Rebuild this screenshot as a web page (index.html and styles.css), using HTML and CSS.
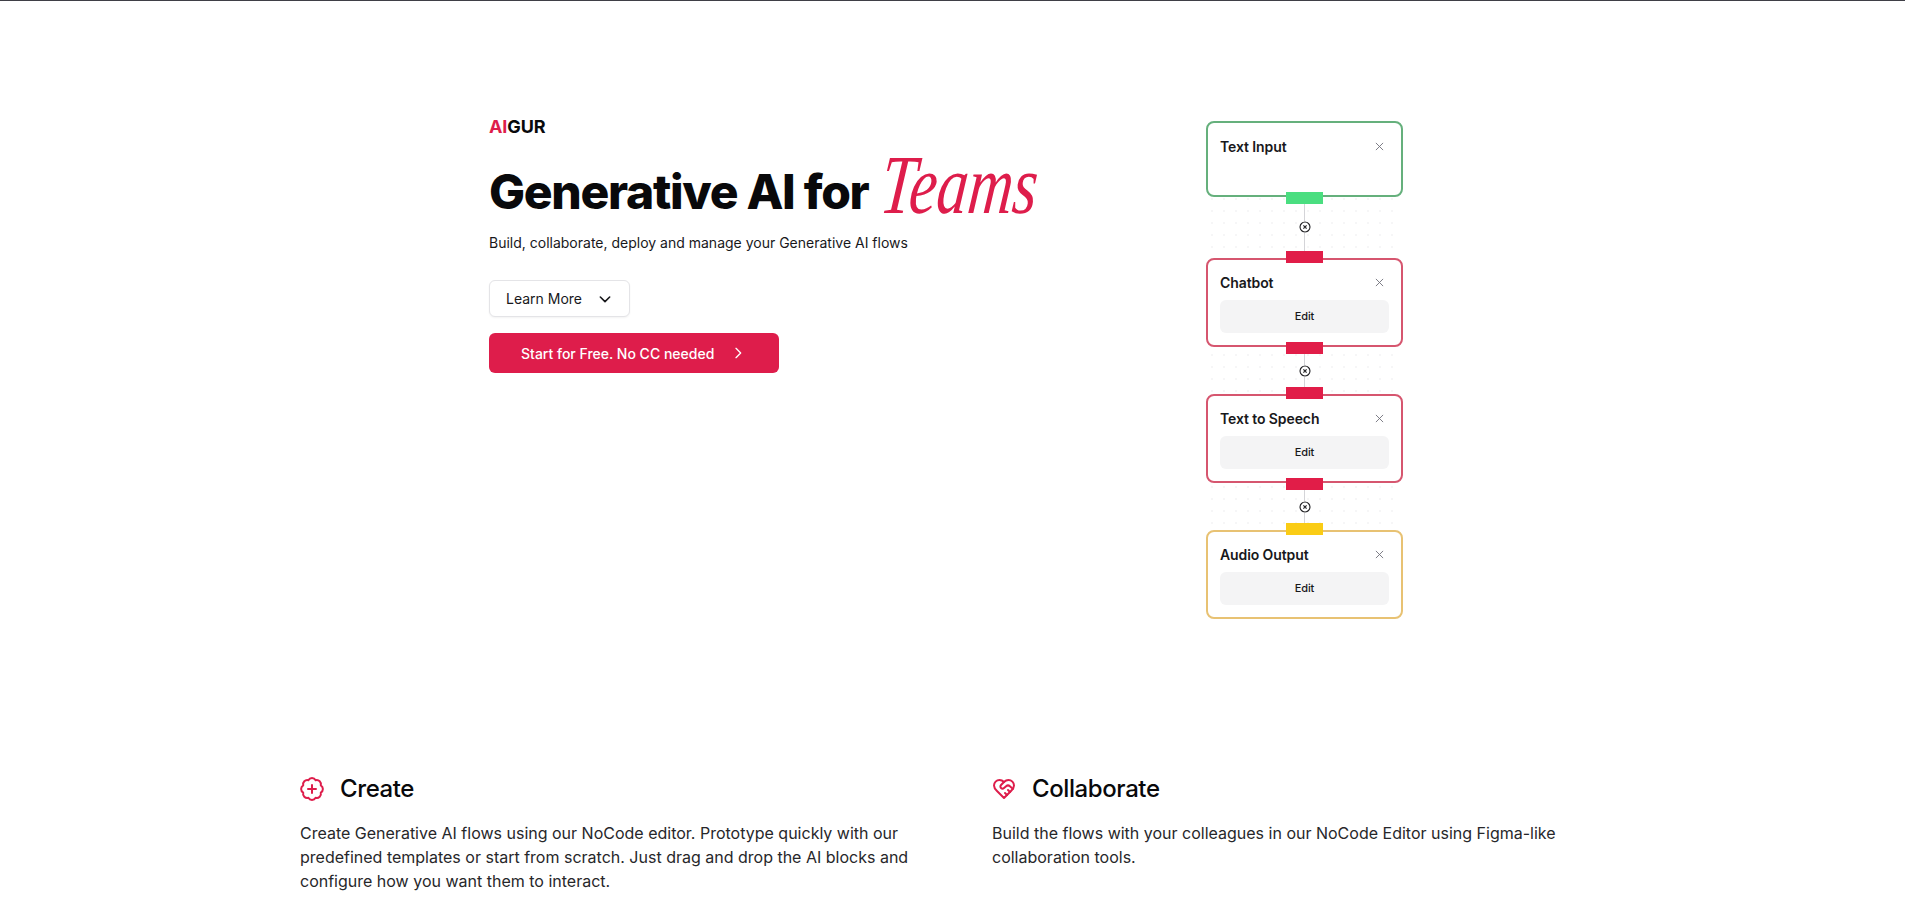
FILE: index.html
```html
<!DOCTYPE html>
<html lang="en">
  <head>
    <meta charset="UTF-8" />
    <meta name="viewport" content="width=device-width, initial-scale=1.0" />
    <title>Aigur</title>
    <link rel="stylesheet" href="styles.css">
  </head>
  <body>
    <section class="hero">
      <div class="intro">
        <div class="logo"><span class="logo-red">AI</span>GUR</div>
        <h1>Generative AI for <span class="script">Teams</span></h1>
        <p class="tagline">Build, collaborate, deploy and manage your Generative AI flows</p>
        <button class="btn-learn">
          Learn More
          <svg width="16" height="16" viewBox="0 0 24 24" fill="none" stroke="currentColor" stroke-width="2.4" stroke-linecap="round" stroke-linejoin="round"><path d="m5 9 7 7 7-7"/></svg>
        </button>
        <button class="btn-start">
          Start for Free. No CC needed
          <svg width="16" height="16" viewBox="0 0 24 24" fill="none" stroke="currentColor" stroke-width="2" stroke-linecap="round" stroke-linejoin="round"><path d="m9 5 7 7-7 7"/></svg>
        </button>
      </div>

      <!-- Flow diagram -->
      <div class="flow">
        <div class="node node-green node-first">
          <div class="node-head">
            <span>Text Input</span>
            <svg class="node-close" width="9" height="9" viewBox="0 0 10 10"><path d="M1 1l8 8M9 1l-8 8"/></svg>
          </div>
          <i class="handle handle-bottom handle-green"></i>
        </div>
        <div class="link link-tall">
          <svg width="12" height="12" viewBox="0 0 12 12"><circle cx="6" cy="6" r="5" /><path d="M4.4 4.4l3.2 3.2M7.6 4.4l-3.2 3.2"/></svg>
        </div>
        <div class="node node-red">
          <i class="handle handle-top handle-red"></i>
          <div class="node-head">
            <span>Chatbot</span>
            <svg class="node-close" width="9" height="9" viewBox="0 0 10 10"><path d="M1 1l8 8M9 1l-8 8"/></svg>
          </div>
          <div class="node-edit">Edit</div>
          <i class="handle handle-bottom handle-red"></i>
        </div>
        <div class="link">
          <svg width="12" height="12" viewBox="0 0 12 12"><circle cx="6" cy="6" r="5" /><path d="M4.4 4.4l3.2 3.2M7.6 4.4l-3.2 3.2"/></svg>
        </div>
        <div class="node node-red">
          <i class="handle handle-top handle-red"></i>
          <div class="node-head">
            <span>Text to Speech</span>
            <svg class="node-close" width="9" height="9" viewBox="0 0 10 10"><path d="M1 1l8 8M9 1l-8 8"/></svg>
          </div>
          <div class="node-edit">Edit</div>
          <i class="handle handle-bottom handle-red"></i>
        </div>
        <div class="link">
          <svg width="12" height="12" viewBox="0 0 12 12"><circle cx="6" cy="6" r="5" /><path d="M4.4 4.4l3.2 3.2M7.6 4.4l-3.2 3.2"/></svg>
        </div>
        <div class="node node-yellow">
          <i class="handle handle-top handle-yellow"></i>
          <div class="node-head">
            <span>Audio Output</span>
            <svg class="node-close" width="9" height="9" viewBox="0 0 10 10"><path d="M1 1l8 8M9 1l-8 8"/></svg>
          </div>
          <div class="node-edit">Edit</div>
        </div>
      </div>
    </section>

    <section class="features">
      <div class="feature">
        <h2>
          <svg width="24" height="24" viewBox="0 0 24 24" fill="none" stroke="currentColor" stroke-width="2" stroke-linecap="round" stroke-linejoin="round"><path d="M20.78 8.36A4.2 4.2 0 0 1 20.78 15.64A4.2 4.2 0 0 1 15.64 20.78A4.2 4.2 0 0 1 8.36 20.78A4.2 4.2 0 0 1 3.22 15.64A4.2 4.2 0 0 1 3.22 8.36A4.2 4.2 0 0 1 8.36 3.22A4.2 4.2 0 0 1 15.64 3.22A4.2 4.2 0 0 1 20.78 8.36Z"/><path d="M12 8v8M8 12h8"/></svg>
          Create
        </h2>
        <p>Create Generative AI flows using our NoCode editor. Prototype quickly with our predefined templates or start from scratch. Just drag and drop the AI blocks and configure how you want them to interact.</p>
      </div>
      <div class="feature">
        <h2>
          <svg width="24" height="24" viewBox="0 0 24 24" fill="none" stroke="currentColor" stroke-width="2" stroke-linecap="round" stroke-linejoin="round"><path d="M19 14c1.49-1.46 3-3.21 3-5.5A5.5 5.5 0 0 0 16.5 3c-1.76 0-3 .5-4.5 2-1.5-1.5-2.74-2-4.5-2A5.5 5.5 0 0 0 2 8.5c0 2.3 1.5 4.05 3 5.5l7 7Z"/><path d="M12 5 9.04 7.96a2.17 2.17 0 0 0 0 3.08c.82.82 2.13.85 3 .07l2.07-1.9a2.82 2.82 0 0 1 3.79 0l2.96 2.66"/><path d="m18 15-2-2"/><path d="m15 18-2-2"/></svg>
          Collaborate
        </h2>
        <p>Build the flows with your colleagues in our NoCode Editor using Figma-like<br>collaboration tools.</p>
      </div>
    </section>
  </body>
</html>
```

FILE: styles.css
```css
* {
  box-sizing: border-box;
}

html,
body {
  height: 100%;
}

body {
  margin: 0;
  background-color: #fff;
  color: #18181b;
  font-family: "Inter", sans-serif;
  border-top: 1px solid #3f3f46;
  overflow: hidden;
}

/* Top part */
.hero {
  display: flex;
  justify-content: space-between;
  width: 927px;
  height: 772px;
  margin: 0 auto;
  padding: 114px 13px 0 0;
}

.intro {
  display: flex;
  flex-direction: column;
  align-items: flex-start;
}

.logo {
  font-size: 18px;
  font-weight: 700;
  line-height: 24px;
  letter-spacing: -0.1px;
  color: #09090b;
}

.logo-red {
  color: #de1d4b;
}

h1 {
  margin: 14px 0 0;
  font-size: 48px;
  font-weight: 800;
  line-height: 64px;
  letter-spacing: -1.3px;
  color: #09090b;
  white-space: nowrap;
}

/* No script font here, so squeeze a tall italic */
.script {
  display: inline-block;
  font-family: "Liberation Serif", serif;
  font-size: 84px;
  font-style: italic;
  font-weight: 400;
  line-height: 64px;
  letter-spacing: 0;
  color: #de1d4b;
  vertical-align: -4px;
  transform: scaleX(0.74) skewX(-8deg);
  transform-origin: left bottom;
}

.tagline {
  margin: 9px 0 0;
  font-size: 14px;
  line-height: 20px;
}

.btn-learn,
.btn-start {
  display: flex;
  align-items: center;
  font-family: inherit;
  font-size: 14px;
  border-radius: 6px;
}

.btn-learn {
  gap: 15px;
  height: 37px;
  margin-top: 27px;
  padding: 0 16px 0 16px;
  background-color: #fff;
  border: 1px solid #e4e4e7;
  box-shadow: 0 1px 2px rgba(0, 0, 0, 0.05);
  color: #18181b;
}

.btn-start {
  justify-content: space-between;
  width: 290px;
  height: 40px;
  margin-top: 16px;
  padding: 0 33px 0 32px;
  background-color: #de1d4b;
  border: 0;
  color: #fff;
  font-weight: 500;
}

/* Flow diagram */
.flow {
  display: flex;
  flex-direction: column;
  width: 197px;
  margin-top: 6px;
  height: 498px;
  background-image: radial-gradient(#f6f6f7 1px, transparent 1px);
  background-size: 12px 12px;
}

.node {
  position: relative;
  height: 89px;
  padding: 15px 12px 0;
  background-color: #fff;
  border: 2px solid #d6566f;
  border-radius: 8px;
  font-size: 14px;
  font-weight: 600;
  letter-spacing: -0.1px;
}

.node-first {
  height: 76px;
  padding-top: 16px;
  border-color: #65b07c;
}

.node-yellow {
  border-color: #e8c273;
}

.node-head {
  display: flex;
  justify-content: space-between;
  align-items: center;
  height: 20px;
  margin-top: -3px;
}

.node-close {
  margin-right: 5px;
}

.node-close path {
  stroke: #71717a;
  stroke-width: 1;
  fill: none;
}

.node-edit {
  height: 33px;
  margin-top: 8px;
  background-color: #f4f4f5;
  border-radius: 6px;
  font-size: 11px;
  font-weight: 500;
  line-height: 33px;
  text-align: center;
}

.handle {
  position: absolute;
  left: 78px;
  width: 37px;
  height: 12px;
}

.handle-top {
  top: -9px;
}

.handle-bottom {
  bottom: -9px;
}

.handle-green {
  background-color: #4ade80;
}

.handle-red {
  background-color: #e11d48;
}

.handle-yellow {
  background-color: #facc15;
}

.link {
  display: flex;
  align-items: center;
  justify-content: center;
  height: 48px;
  background: linear-gradient(#d4d4d8, #d4d4d8) center / 1px 100% no-repeat;
}

.link-tall {
  height: 62px;
}

.link svg {
  background-color: #fff;
  border-radius: 50%;
}

.link circle,
.link path {
  fill: none;
  stroke: #27272a;
  stroke-width: 1.2;
}

/* Bottom part */
.features {
  display: grid;
  grid-template-columns: 660px 613px;
  gap: 32px;
  width: 1305px;
  margin: 0 auto;
}

.feature h2 {
  display: flex;
  align-items: center;
  gap: 16px;
  margin: 0;
  font-size: 24px;
  font-weight: 500;
  line-height: 32px;
  letter-spacing: -0.4px;
  color: #09090b;
}

.feature h2 svg {
  color: #de1d4b;
}

.feature p {
  margin: 16px 0 0;
  font-size: 16px;
  line-height: 24px;
  color: #27272a;
}
```
